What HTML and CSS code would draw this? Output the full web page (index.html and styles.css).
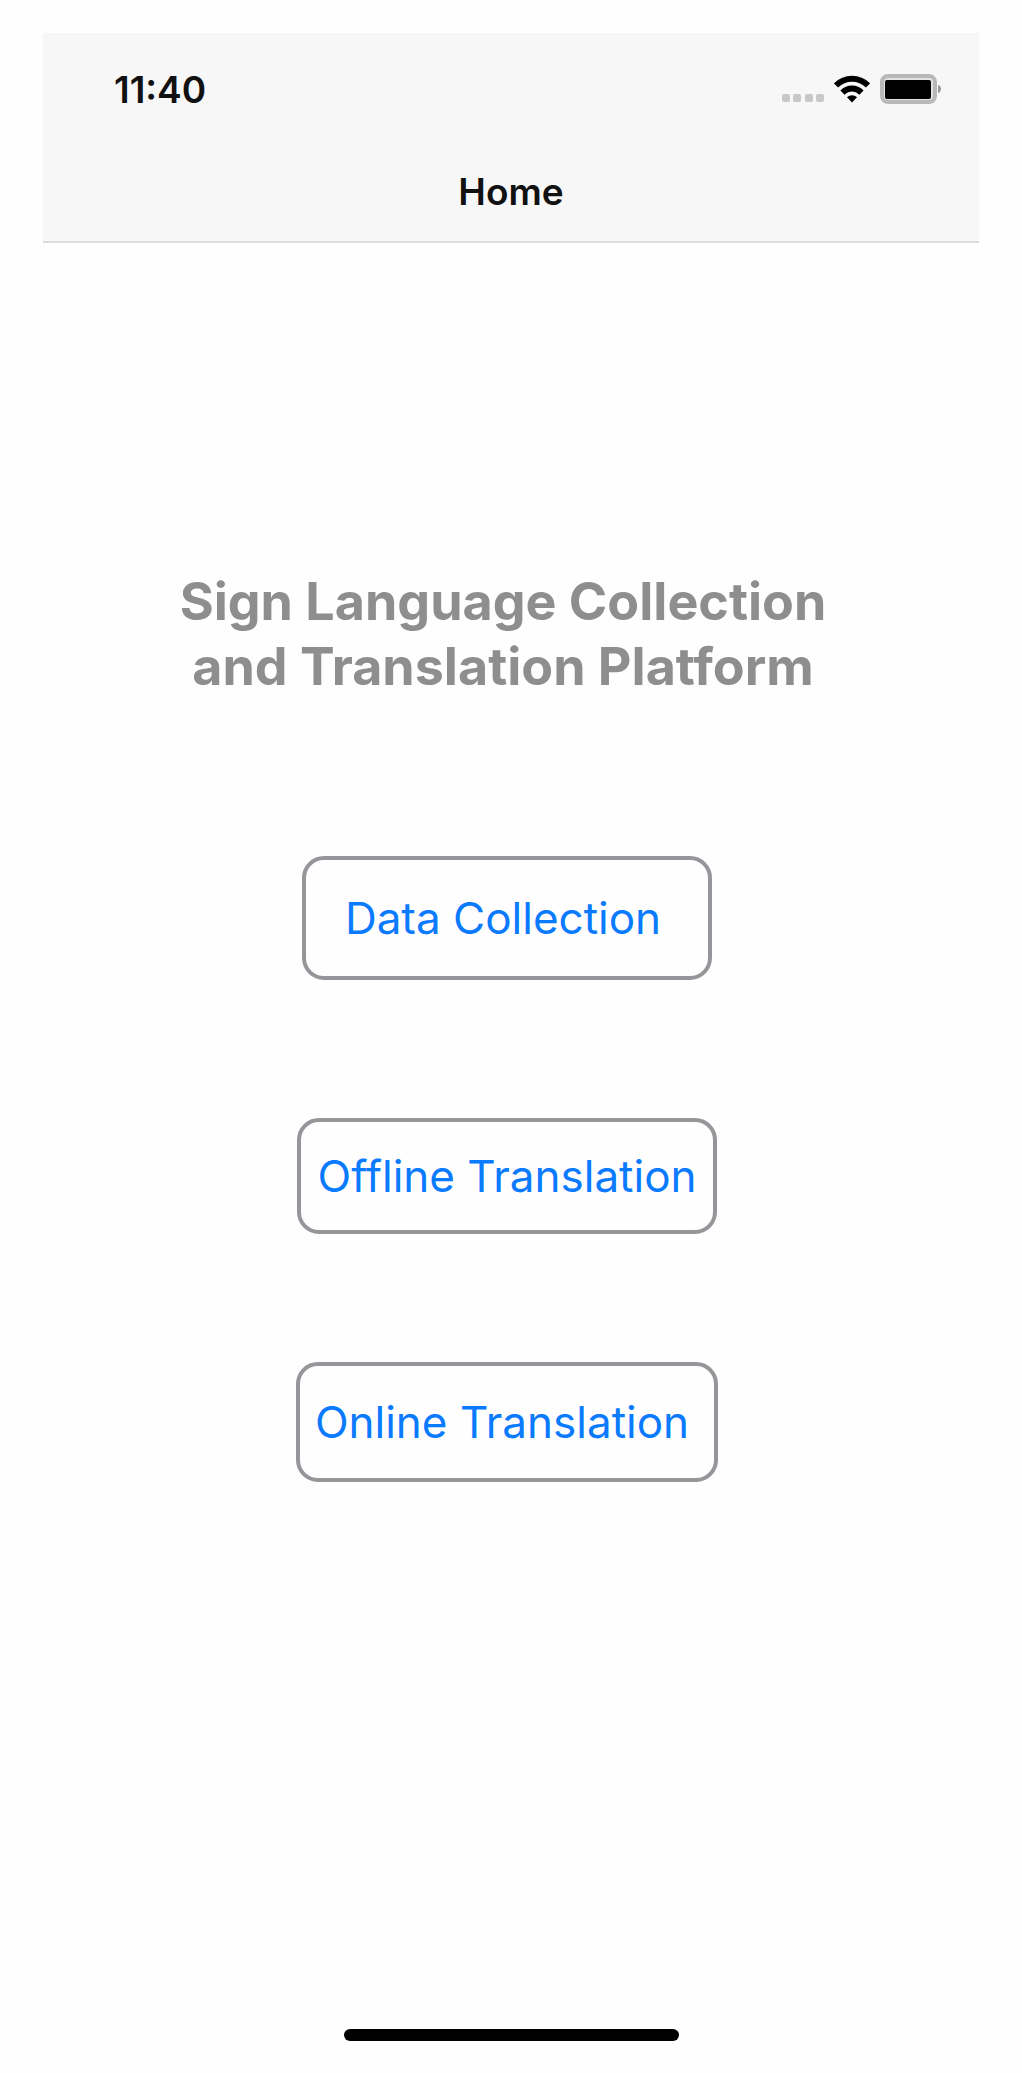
FILE: index.html
```html
<!DOCTYPE html>
<html lang="en">
<head>
  <meta charset="UTF-8" />
  <title>Home</title>
  <meta name="viewport" content="width=device-width, initial-scale=1.0" />
  <link rel="stylesheet" href="styles.css">
</head>
<body>
  <div class="screen">
    <header class="header">
      <div class="status-bar">
        <span class="time">11:40</span>
        <div class="status-icons">
          <svg class="signal" width="42" height="30" viewBox="0 0 42 30" fill="#c8c8c8" aria-hidden="true">
            <rect x="0" y="20" width="8" height="8" rx="2" />
            <rect x="11" y="20" width="8" height="8" rx="2" />
            <rect x="23" y="20" width="8" height="8" rx="2" />
            <rect x="34" y="20" width="8" height="8" rx="2" />
          </svg>
          <svg class="wifi" width="36" height="30" viewBox="0 0 36 30" aria-hidden="true">
            <g fill="none" stroke="#000" stroke-width="6">
              <path d="M2 11.400C11 2.400 25 2.400 34 11.400" />
              <path d="M8.500 18.600C14 13 22 13 27.500 18.600" />
            </g>
            <path d="M18 28.500l-5-5.200c2.800-2.700 7.200-2.700 10 0z" />
          </svg>
          <svg class="battery" width="61" height="30" viewBox="0 0 61 30" aria-hidden="true">
            <rect x="2" y="2" width="53" height="26" rx="6" fill="#e2e2e2" stroke="#b8b8b8" stroke-width="4" />
            <rect x="5" y="6" width="46" height="19" rx="2" />
            <path d="M58 11c4 1 4 7 0 8z" fill="#999" />
          </svg>
        </div>
      </div>
      <div class="nav-title">Home</div>
    </header>

    <main class="content">
      <h1>Sign Language Collection<br>and Translation Platform</h1>
      <button type="button" class="menu-btn collection">Data Collection</button>
      <button type="button" class="menu-btn offline">Offline Translation</button>
      <button type="button" class="menu-btn online">Online Translation</button>
    </main>

    <div class="home-indicator"></div>
  </div>
</body>
</html>
```
FILE: styles.css
```css
* {
  box-sizing: border-box;
}

body {
  margin: 0;
  background-color: #fefefe;
  font-family: Inter, "Liberation Sans", sans-serif;
}

.screen {
  display: flex;
  flex-direction: column;
  min-height: 100vh;
  padding: 33px 43px 32px;
}

.header {
  height: 210px;
  background: #f7f7f7;
  border-bottom: 2px solid #dcdcdc;
}

.status-bar {
  display: flex;
  justify-content: space-between;
  align-items: center;
  height: 112px;
  padding: 0 38px 0 71px;
}

.time {
  font-size: 37px;
  font-weight: 600;
  color: #111;
}

.status-icons {
  display: flex;
  align-items: center;
}

.wifi {
  margin: 0 10px;
}

.nav-title {
  font-size: 37px;
  line-height: 94px;
  font-weight: 600;
  text-align: center;
  color: #111;
}

.content {
  display: flex;
  flex-direction: column;
  align-items: center;
  padding: 326px 8px 0 0;
}

h1 {
  margin: 0 8px 157px 0;
  font-size: 52px;
  line-height: 65px;
  font-weight: 700;
  text-align: center;
  color: #8e8e8e;
}

.menu-btn {
  border: 4px solid #96969a;
  border-radius: 22px;
  background: #fefefe;
  color: #0a7aff;
  font-family: inherit;
  font-size: 44px;
  line-height: 56px;
  cursor: pointer;
}

.collection {
  width: 410px;
  height: 124px;
  padding: 0 8px 0 0;
  margin-bottom: 138px;
}

.offline {
  width: 420px;
  height: 116px;
  padding: 0;
  margin-bottom: 128px;
}

.online {
  width: 422px;
  height: 120px;
  padding: 0 10px 0 0;
}

.home-indicator {
  width: 335px;
  height: 12px;
  margin: auto auto 0;
  border-radius: 6px;
  background: #000;
}
```
